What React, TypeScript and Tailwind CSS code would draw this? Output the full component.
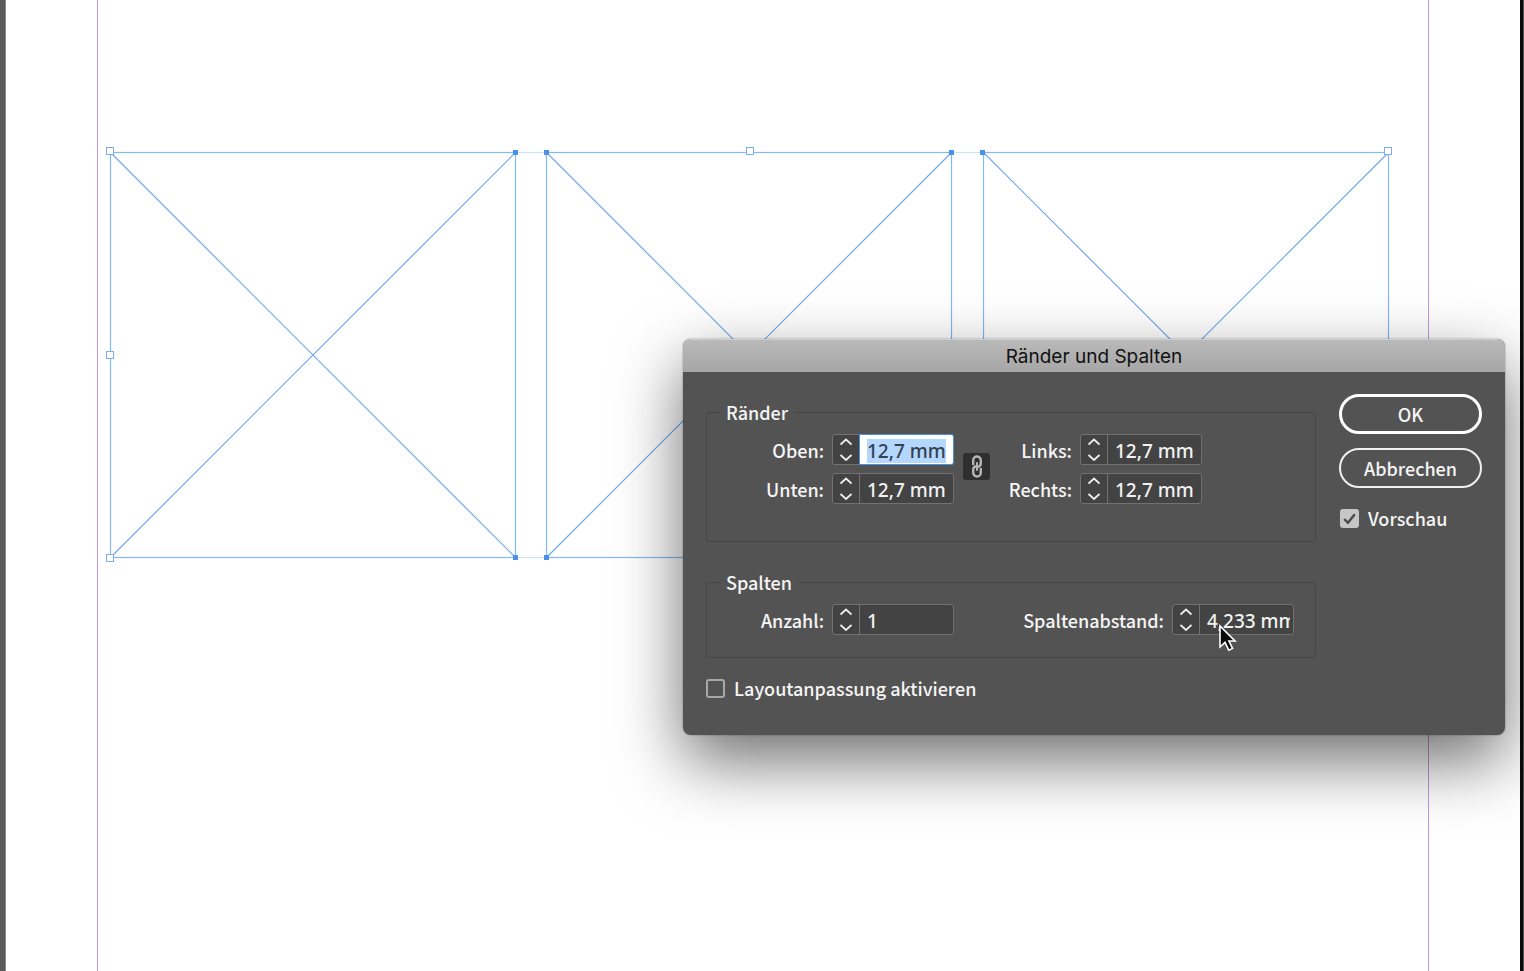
import React, { useEffect, useRef } from "react";
import { clsx } from "clsx";

type NumberFieldProps = {
  id: string;
  label: string;
  value: string;
  labelClass: string;
  selected?: boolean;
};

type HandleProps = {
  x: number;
  y: number;
};

const Chevron = ({ d }: { d: string }) => (
  <svg className="h-2 w-3" viewBox="0 0 12 8" fill="none">
    <path d={d} stroke="#f0f0f0" strokeWidth="1.8" />
  </svg>
);

const NumberField = ({
  id,
  label,
  value,
  labelClass,
  selected = false,
}: NumberFieldProps) => {
  const inputRef = useRef<HTMLInputElement>(null);

  useEffect(() => {
    if (selected) {
      inputRef.current?.focus();
      inputRef.current?.select();
    }
  }, [selected]);

  return (
    <div className="flex items-center gap-2">
      <label htmlFor={id} className={clsx("text-right", labelClass)}>
        {label}
      </label>
      <div className="flex h-[31px] w-[122px] rounded-[3px] border border-[#717171] bg-[#434343]">
        <div className="flex w-[27px] shrink-0 flex-col items-center justify-between border-r border-[#717171] py-[3px]">
          <button type="button" aria-label={`${label} +`}>
            <Chevron d="M.5 6.5 6 1.5l5.500 5" />
          </button>
          <button type="button" aria-label={`${label} -`}>
            <Chevron d="M.5 2 6 7l5.500-5" />
          </button>
        </div>
        <input
          id={id}
          ref={inputRef}
          defaultValue={value}
          className={clsx(
            "w-full min-w-0 pl-[7px] pr-[3px] pt-[2px] font-['Noto_Sans',sans-serif] text-[19px] leading-6 outline-none selection:bg-[#b3d7ff] selection:text-[#33414f]",
            selected
              ? "rounded-r-[2px] bg-white text-[#33414f] ring-1 ring-[#4a90e2]"
              : "text-[#f2f2f2]"
          )}
        />
      </div>
    </div>
  );
};

const OpenHandle = ({ x, y }: HandleProps) => (
  <rect x={x - 3.5} y={y - 3.5} width="7" height="7" fill="#fff" stroke="#7aaef0" />
);

const SolidHandle = ({ x, y }: HandleProps) => (
  <rect x={x - 2.5} y={y - 2.5} width="5" height="5" fill="#4a92e6" />
);

const Artwork = () => (
  <svg className="absolute inset-0 h-full w-full" fill="none">
    <path d="M110 152.500H1388M110 557.500H1388" stroke="#c9e2fb" />
    {[110, 546, 983].map((x) => (
      <g key={x} stroke="#85b9f3" strokeWidth="1.2">
        <rect x={x + 0.5} y="152.500" width="405" height="405" />
        <path d={`M${x + 0.5} 152.500l405 405M${x + 405.5} 152.500l-405 405`} stroke="#6fa8ec" />
      </g>
    ))}
    <SolidHandle x={515.5} y={152.5} />
    <SolidHandle x={546.5} y={152.5} />
    <SolidHandle x={951.5} y={152.5} />
    <SolidHandle x={982.5} y={152.5} />
    <SolidHandle x={515.5} y={557.5} />
    <SolidHandle x={546.5} y={557.5} />
    <OpenHandle x={110} y={151} />
    <OpenHandle x={750} y={151} />
    <OpenHandle x={1388} y={151} />
    <OpenHandle x={110} y={355} />
    <OpenHandle x={110} y={558} />
  </svg>
);

const LinkIcon = () => (
  <svg className="h-[23px] w-3" viewBox="0 0 12 23" fill="none">
    <path
      d="M2.200 10V5.300a3.800 3.800 0 0 1 7.600 0v3.200a3.400 3.400 0 0 1-2.800 3.300M9.800 13v4.700a3.800 3.800 0 0 1-7.600 0v-3.200A3.400 3.400 0 0 1 5 11.200"
      stroke="#b5b5b5"
      strokeWidth="2.400"
    />
    <path d="M6 8v7" stroke="#b5b5b5" strokeWidth="2" strokeLinecap="round" />
  </svg>
);

const Cursor = () => (
  <svg
    className="pointer-events-none absolute left-[535px] top-[285px] h-7 w-5"
    viewBox="0 0 20 28"
  >
    <path
      d="M2 2v21l5-4.600 3.800 7.800 3.800-1.800-3.700-7.400H17z"
      fill="#0a0a0a"
      stroke="#fff"
      strokeWidth="1.600"
    />
  </svg>
);

const MarginsDialog = () => {
  return (
    <div
      role="dialog"
      aria-labelledby="dialog-title"
      className="absolute left-[683px] top-[339px] w-[822px] rounded-lg bg-[#535353] font-['Noto_Sans_CJK_JP',sans-serif] text-lg font-medium leading-6 text-[#f5f5f5] shadow-[0_26px_66px_rgba(0,0,0,0.57),0_0_2px_rgba(0,0,0,0.4)]"
    >
      {/* title bar */}
      <h1
        id="dialog-title"
        className="h-[33px] rounded-t-lg border-t border-[#cfcfcf] bg-gradient-to-b from-[#b9b9b9] to-[#a6a6a6] pt-px text-center font-['Inter',sans-serif] text-[19px] font-normal leading-8 text-[#111]"
      >
        Ränder und Spalten
      </h1>
      <form className="flex items-start gap-[23px] px-[23px] pb-[35px] pt-[22px]">
        <div className="flex-1 pt-[6px]">
          {/* margins */}
          <fieldset className="rounded-[3px] border border-[#474747] pb-[37px]">
            <legend className="ml-[13px] px-[6px]">Ränder</legend>
            <div className="flex items-start pt-[10px]">
              <div className="flex flex-col gap-2">
                <NumberField id="top" label="Oben:" value="12,7 mm" labelClass="w-[117px]" selected />
                <NumberField id="bottom" label="Unten:" value="12,7 mm" labelClass="w-[117px]" />
              </div>
              <button
                type="button"
                aria-label="Verketten"
                className="ml-[9px] mt-[19px] flex size-[27px] items-center justify-center rounded-[3px] bg-[#2f2f2f]"
              >
                <LinkIcon />
              </button>
              <div className="flex flex-col gap-2">
                <NumberField id="left" label="Links:" value="12,7 mm" labelClass="w-[82px]" />
                <NumberField id="right" label="Rechts:" value="12,7 mm" labelClass="w-[82px]" />
              </div>
            </div>
          </fieldset>
          {/* columns */}
          <fieldset className="mt-7 rounded-[3px] border border-[#474747] pb-[22px]">
            <legend className="ml-[13px] px-[6px]">Spalten</legend>
            <div className="flex pt-[10px]">
              <NumberField id="count" label="Anzahl:" value="1" labelClass="w-[117px]" />
              <NumberField id="gutter" label="Spaltenabstand:" value="4,233 mm" labelClass="w-[210px]" />
            </div>
          </fieldset>
          <label className="mt-[18px] flex items-center gap-[9px]">
            <input
              type="checkbox"
              className="size-[19px] appearance-none rounded-[3px] border-2 border-[#a8a8a8]"
            />
            Layoutanpassung aktivieren
          </label>
        </div>
        {/* actions */}
        <div className="flex w-[143px] flex-col">
          <button type="button" className="h-10 rounded-full border-[3px] border-white">
            OK
          </button>
          <button type="button" className="mt-[14px] h-10 rounded-full border-2 border-[#f0f0f0]">
            Abbrechen
          </button>
          <label className="mt-[18px] flex items-center gap-[9px] pl-px">
            <span className="relative flex">
              <input
                type="checkbox"
                defaultChecked
                className="size-[19px] appearance-none rounded-[3px] bg-[#c6c6c6]"
              />
              <svg
                className="pointer-events-none absolute inset-0 size-[19px]"
                viewBox="0 0 18 18"
                fill="none"
              >
                <path d="m4 9.500 3.500 3.500L14 5" stroke="#484848" strokeWidth="2.200" />
              </svg>
            </span>
            Vorschau
          </label>
        </div>
      </form>
      <Cursor />
    </div>
  );
};

const App = () => {
  return (
    <main className="relative flex h-screen overflow-hidden bg-white">
      <div className="w-[6px] shrink-0 border-r border-[#8a8a8a] bg-[#5a5a5a]" />
      {/* page with its margin guides */}
      <div className="flex-1 pl-[91px] pr-[91px]">
        <div className="h-full border-x border-[#c795e0]" />
      </div>
      <div className="w-1 shrink-0 border-r border-[#555] bg-[#0c0c0c]" />
      <Artwork />
      <MarginsDialog />
    </main>
  );
};

export default App;
